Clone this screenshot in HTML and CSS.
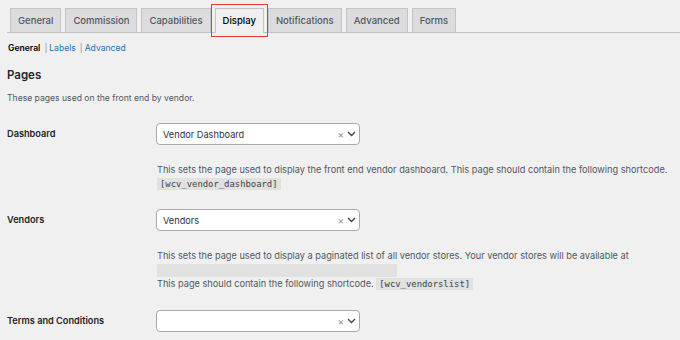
FILE: index.html
```html
<!DOCTYPE html>
<html lang="en">
<head>
  <meta charset="UTF-8" />
  <title>Display settings</title>
  <link rel="stylesheet" href="styles.css">
</head>
<body>
<nav class="nav-tabs">
  <a class="tab">General</a>
  <a class="tab">Commission</a>
  <a class="tab">Capabilities</a>
  <a class="tab active">Display</a>
  <a class="tab">Notifications</a>
  <a class="tab">Advanced</a>
  <a class="tab">Forms</a>
</nav>
<ul class="subsubsub">
  <li class="current">General</li>
  <li><span class="sep">|</span><a>Labels</a></li>
  <li><span class="sep">|</span><a>Advanced</a></li>
</ul>
<h2>Pages</h2>
<p class="intro">These pages used on the front end by vendor.</p>

<div class="form-row">
  <div class="label">Dashboard</div>
  <div class="field">
    <div class="select">
      <span class="value">Vendor Dashboard</span>
      <span class="clear">&times;</span>
      <svg class="chevron" width="9" height="6" viewBox="0 0 9 6"><path d="M1 1l3.5 3.5L8 1" fill="none" stroke="#3c434a" stroke-width="1.3"/></svg>
    </div>
    <p class="desc">This sets the page used to display the front end vendor dashboard. This page should contain the following shortcode.<br><code>[wcv_vendor_dashboard]</code></p>
  </div>
</div>

<div class="form-row">
  <div class="label">Vendors</div>
  <div class="field">
    <div class="select">
      <span class="value">Vendors</span>
      <span class="clear">&times;</span>
      <svg class="chevron" width="9" height="6" viewBox="0 0 9 6"><path d="M1 1l3.5 3.5L8 1" fill="none" stroke="#3c434a" stroke-width="1.3"/></svg>
    </div>
    <p class="desc">This sets the page used to display a paginated list of all vendor stores. Your vendor stores will be available at<br><span class="url"></span><br>This page should contain the following shortcode. <code>[wcv_vendorslist]</code></p>
  </div>
</div>

<div class="form-row">
  <div class="label">Terms and Conditions</div>
  <div class="field">
    <div class="select">
      <span class="value"></span>
      <span class="clear">&times;</span>
      <svg class="chevron" width="9" height="6" viewBox="0 0 9 6"><path d="M1 1l3.5 3.5L8 1" fill="none" stroke="#3c434a" stroke-width="1.3"/></svg>
    </div>
  </div>
</div>
</body>
</html>
```

FILE: styles.css
```css
body {
  margin: 0;
  padding: 0 7px;
  background: #f0f0f1;
  font-family: Inter, "Noto Sans", sans-serif;
  color: #1d2327;
}
.nav-tabs {
  display: flex;
  gap: 4px;
  padding: 8px 0 0 3px;
  border-bottom: 1px solid #c3c4c7;
  margin: 0 -7px 0 0;
}
.tab {
  display: block;
  padding: 0 7px;
  height: 23px;
  line-height: 23px;
  font-size: 9.5px;
  font-weight: 500;
  color: #50575e;
  background: #dcdcde;
  border: 1px solid #c3c4c7;
  border-bottom: none;
}
.tab.active {
  color: #000;
  background: #f0f0f1;
  height: 24px;
  margin-bottom: -1px;
  outline: 1.5px solid #e8372c;
  outline-offset: 3px;
}
.subsubsub {
  list-style: none;
  margin: 8px 0 0 1px;
  padding: 0;
  display: flex;
  font-size: 8.6px;
  line-height: 14px;
}
.subsubsub li.current {
  font-weight: 600;
  color: #000;
}
.subsubsub .sep {
  color: #8c8f94;
  margin: 0 2px 0 4px;
}
.subsubsub a {
  color: #2271b1;
}
h2 {
  font-size: 11.5px;
  font-weight: 600;
  margin: 11px 0 0 0;
  line-height: 18px;
}
.intro {
  font-size: 8.6px;
  color: #50575e;
  margin: 8px 0 0 0;
  line-height: 13px;
}
.form-row {
  display: grid;
  grid-template-columns: 149px 1fr;
  margin-top: 18px;
}
.form-row + .form-row {
  margin-top: 18px;
}
.form-row:last-child {
  margin-top: 19px;
}
.label {
  font-size: 9.2px;
  font-weight: 600;
  line-height: 22px;
}
.select {
  display: flex;
  align-items: center;
  width: 193px;
  height: 20px;
  padding: 0 3px 0 6px;
  background: #fff;
  border: 1px solid #a7aaad;
  border-radius: 4px;
}
.select .value {
  flex: 1;
  font-size: 9.2px;
  color: #2c3338;
}
.select .clear {
  font-size: 10px;
  color: #8c8f94;
  margin-right: 3px;
}
.desc {
  margin: 18px 0 0 1px;
  font-size: 9.2px;
  line-height: 14px;
  color: #50575e;
}
.field .desc {
  white-space: nowrap;
}
code {
  font-family: "DejaVu Sans Mono", monospace;
  font-size: 8.9px;
  background: #e1e1e2;
  color: #3c434a;
  padding: 1px 3px;
}
.url {
  display: inline-block;
  width: 240px;
  height: 13px;
  background: #e1e1e2;
  vertical-align: middle;
}
```
